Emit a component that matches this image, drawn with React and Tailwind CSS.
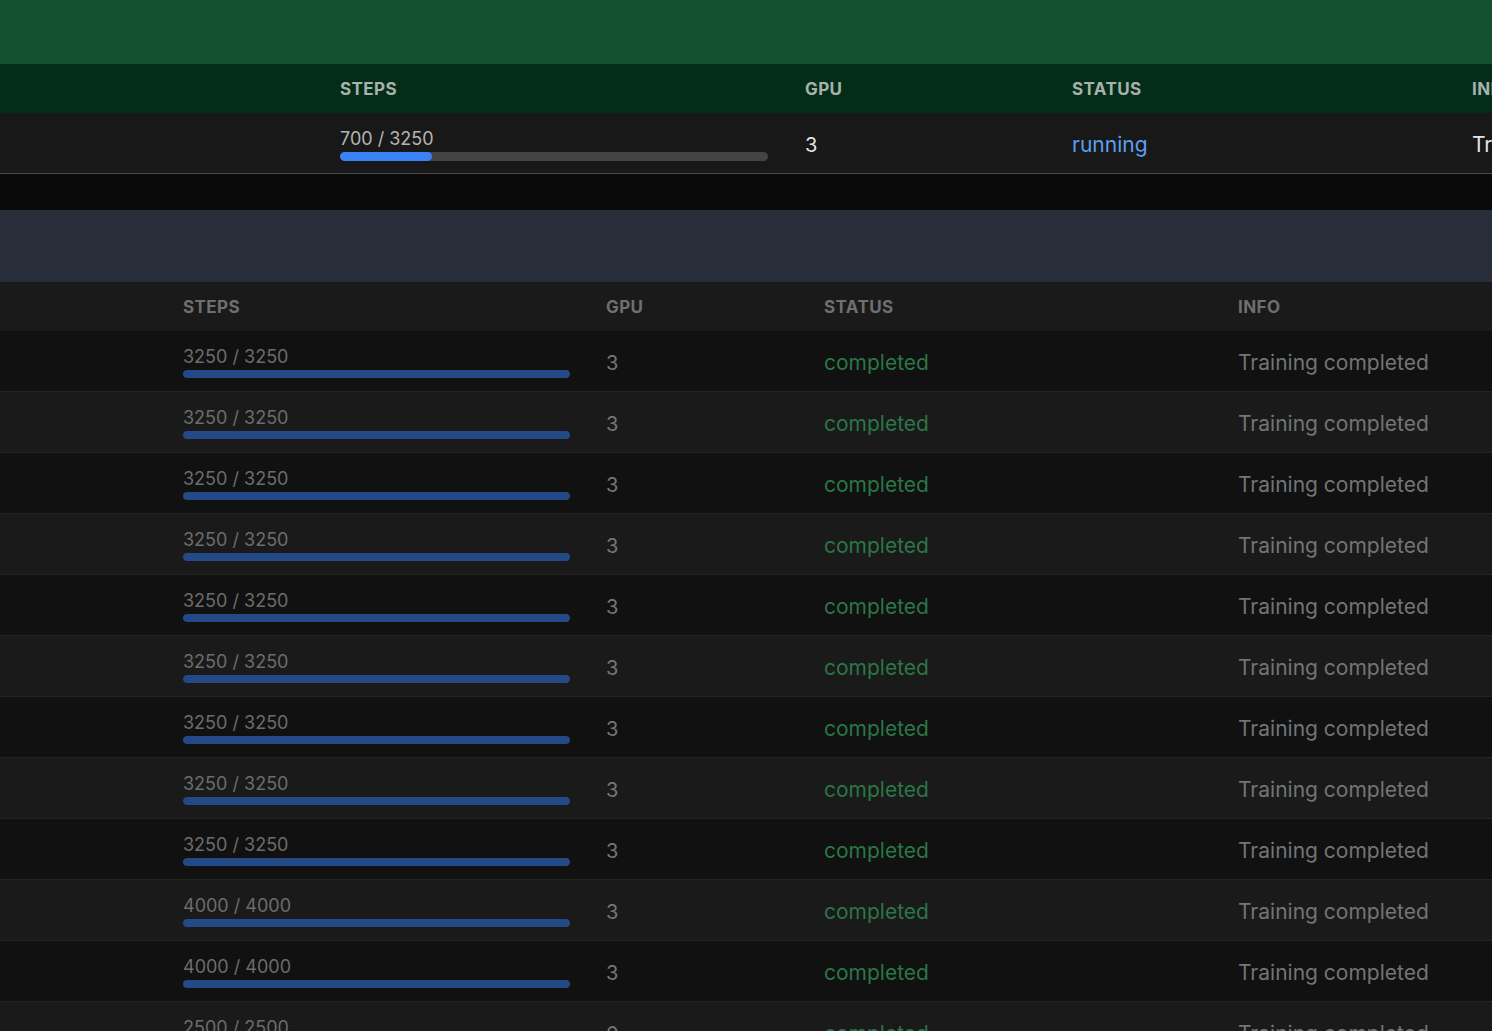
const rows = [
  ...Array.from({ length: 9 }, () => ({ done: 3250, total: 3250, gpu: 3 })),
  { done: 4000, total: 4000, gpu: 3 },
  { done: 4000, total: 4000, gpu: 3 },
  { done: 2500, total: 2500, gpu: 0 },
];

function Bar({ value, total, track, fill, width, height }) {
  const pct = Math.round((value / total) * 1000) / 10;
  return (
    <div className={`${width} ${height} ${track} rounded-full overflow-hidden`}>
      <div className={`h-full rounded-full ${fill}`} style={{ width: `${pct}%` }} />
    </div>
  );
}

function ActiveJob() {
  return (
    <div className="w-[1700px]">
      <div className="h-16 bg-[#16512f]" />

      {/* header */}
      <div className="flex items-center h-[49px] bg-[#032d19] text-[17px] font-bold tracking-wide text-[#a9b1ab] uppercase pt-[2px]">
        <div className="w-[340px] shrink-0" />
        <div className="w-[465px] shrink-0">Steps</div>
        <div className="w-[267px] shrink-0">GPU</div>
        <div className="w-[400px] shrink-0">Status</div>
        <div className="shrink-0">Info</div>
      </div>

      {/* running row */}
      <div className="flex items-center h-[61px] bg-[#181818] border-b border-[#4a4a4a]">
        <div className="w-[340px] shrink-0" />
        <div className="w-[465px] shrink-0 flex flex-col pt-[3px]">
          <span className="text-[18px] leading-[22px] text-[#b4b4b4]">700 / 3250</span>
          <div className="mt-[2px]">
            <Bar value={700} total={3250} track="bg-[#444444]" fill="bg-[#3b82f6]" width="w-[428px]" height="h-[9px]" />
          </div>
        </div>
        <div className="w-[267px] shrink-0 text-[20px] text-[#e2e2e2] pt-[3px]">3</div>
        <div className="w-[400px] shrink-0 text-[21px] text-[#5b9ff0] pt-[3px]">running</div>
        <div className="shrink-0 text-[21px] text-[#e5e5e5] whitespace-nowrap pt-[3px]">Training in progress</div>
      </div>
    </div>
  );
}

function History() {
  return (
    <div className="w-full">
      <div className="h-[72px] bg-[#272e3a]" />

      <div className="flex items-center h-[49px] bg-[#1a1a1a] text-[17px] font-bold tracking-wide text-[#6f6f6f] uppercase pt-[2px]">
        <div className="w-[183px] shrink-0" />
        <div className="w-[423px] shrink-0">Steps</div>
        <div className="w-[218px] shrink-0">GPU</div>
        <div className="w-[414px] shrink-0">Status</div>
        <div className="shrink-0">Info</div>
      </div>

      {rows.map((r, i) => (
        <div
          key={i}
          className={`flex items-center h-[61px] border-b border-[#242424] ${i % 2 === 0 ? "bg-[#111111]" : "bg-[#1a1a1a]"}`}
        >
          <div className="w-[183px] shrink-0" />
          <div className="w-[423px] shrink-0 flex flex-col pt-[2px]">
            <span className="text-[18px] leading-[22px] text-[#6c6c6c]">
              {r.done} / {r.total}
            </span>
            <div className="mt-[2px]">
              <Bar value={r.done} total={r.total} track="bg-[#2a2a2a]" fill="bg-[#234a87]" width="w-[387px]" height="h-[8px]" />
            </div>
          </div>
          <div className="w-[218px] shrink-0 text-[20px] text-[#767676] pt-[3px]">{r.gpu}</div>
          <div className="w-[414px] shrink-0 text-[21px] text-[#2a7646] pt-[3px]">completed</div>
          <div className="shrink-0 text-[21px] text-[#747474] whitespace-nowrap pt-[3px]">Training completed</div>
        </div>
      ))}
    </div>
  );
}

export default function App() {
  return (
    <div className="w-[1492px] h-[1031px] overflow-hidden bg-[#0a0a0a] font-['Inter',sans-serif]">
      <ActiveJob />
      <div className="h-9 bg-[#0a0a0a]" />
      <History />
    </div>
  );
}
